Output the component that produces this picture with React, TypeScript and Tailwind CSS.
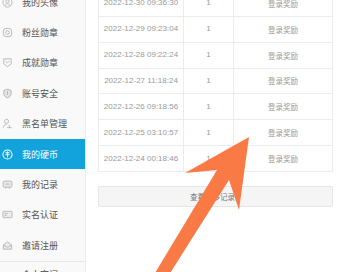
import React from "react";

const ic = "#b5b5b5";

function Icon({ name, active }: { name: string; active?: boolean }) {
  const c = active ? "#ffffff" : ic;
  const common = { width: 11, height: 11, viewBox: "0 0 12 12", fill: "none", stroke: c, strokeWidth: 1 } as const;
  switch (name) {
    case "avatar":
      return (
        <svg {...common}>
          <circle cx="6" cy="6" r="5" />
          <circle cx="6" cy="4.8" r="1.8" />
          <path d="M3 9.5c.8-1.5 1.8-2 3-2s2.2.5 3 2" />
        </svg>
      );
    case "fans":
      return (
        <svg {...common}>
          <rect x="1.5" y="1.5" width="9" height="9" rx="3" />
          <circle cx="6" cy="6" r="2" />
        </svg>
      );
    case "achieve":
      return (
        <svg {...common}>
          <path d="M2 2h8v5.5L6 10.5 2 7.5z" />
          <path d="M4 4.5l2 2 2-2" />
        </svg>
      );
    case "safe":
      return (
        <svg {...common}>
          <path d="M6 1.2l4 1.5v3.5c0 2.3-1.8 3.8-4 4.6-2.2-.8-4-2.3-4-4.6V2.7z" fill="#e4e4e4" />
          <path d="M6 3.5v4" />
        </svg>
      );
    case "black":
      return (
        <svg {...common}>
          <circle cx="5" cy="3.6" r="2.2" />
          <path d="M1.5 10.5c0-2.2 1.6-3.7 3.5-3.7" />
          <path d="M5.5 10.5h5M8 7.5v3" />
        </svg>
      );
    case "coin":
      return (
        <svg {...common} strokeWidth={1.1}>
          <circle cx="6" cy="6" r="5" />
          <path d="M3.8 4h4.4M6 2.8V9.4M3.8 6.2h4.4" />
        </svg>
      );
    case "record":
      return (
        <svg {...common}>
          <rect x="1.2" y="2.2" width="9.6" height="6.8" rx="1.5" fill="#e8e8e8" />
          <path d="M4 9v1.6M8 9v1.6M4 5.6h4" />
        </svg>
      );
    case "realname":
      return (
        <svg {...common}>
          <rect x="1" y="2.5" width="10" height="7" rx="1" fill="#ececec" />
          <path d="M3 5h3M3 7h2" />
        </svg>
      );
    case "invite":
      return (
        <svg {...common}>
          <path d="M1.5 5.5L6 2l4.5 3.5V10h-9z" fill="#ececec" />
          <path d="M1.5 5.5L6 8l4.5-2.5" />
        </svg>
      );
    default:
      return null;
  }
}

const menu = [
  { t: "我的头像", i: "avatar" },
  { t: "粉丝勋章", i: "fans" },
  { t: "成就勋章", i: "achieve" },
  { t: "账号安全", i: "safe" },
  { t: "黑名单管理", i: "black" },
  { t: "我的硬币", i: "coin", active: true },
  { t: "我的记录", i: "record" },
  { t: "实名认证", i: "realname" },
  { t: "邀请注册", i: "invite" },
];

const rows = [
  "2022-12-30 09:36:30",
  "2022-12-29 09:23:04",
  "2022-12-28 09:22:24",
  "2022-12-27 11:18:24",
  "2022-12-26 09:18:56",
  "2022-12-25 03:10:57",
  "2022-12-24 00:18:46",
];

const cjk = { fontFamily: '"Noto Sans CJK SC", "Noto Sans", sans-serif' };
const lat = { fontFamily: '"Liberation Sans", "Noto Sans CJK SC", sans-serif' };

export default function App() {
  return (
    <div className="relative w-[340px] h-[272px] overflow-hidden bg-white">
      <div className="flex h-full">
        <aside className="w-[86px] shrink-0 bg-[#f9f9f9] border-r border-[#ececec] flex flex-col mt-[-13px]">
          {menu.map((m) => (
            <div
              key={m.t}
              className={`h-[30.4px] shrink-0 flex items-center pl-[2px] gap-[9px] ${m.active ? "bg-[#12a3dc]" : ""}`}
            >
              <Icon name={m.i} active={m.active} />
              <span
                style={cjk}
                className={`text-[9px] leading-none ${m.active ? "text-white" : "text-[#555]"}`}
              >
                {m.t}
              </span>
            </div>
          ))}
          <div className="border-t border-[#e6e6e6] h-[30px] shrink-0 flex items-start pt-[8px] pl-[22px] gap-[8px]">
            <span style={cjk} className="text-[9px] leading-none text-[#444]">个人空间</span>
            <span style={cjk} className="text-[8px] leading-none text-[#999]">›</span>
          </div>
        </aside>
        <main className="flex-1 pl-[12px] pr-[7px]">
          <div className="mt-[-9px] border-l border-r border-[#ececec]">
            {rows.map((d) => (
              <div key={d} className="h-[25.86px] flex border-b border-[#ececec]">
                <div style={lat} className="w-[85px] flex items-center justify-center text-[8px] text-[#9a9a9a] border-r border-[#ececec]">
                  {d}
                </div>
                <div style={lat} className="w-[50px] flex items-center justify-center text-[8px] text-[#9a9a9a] border-r border-[#ececec]">
                  1
                </div>
                <div style={cjk} className="flex-1 flex items-center justify-center text-[7.5px] text-[#9a9a9a]">
                  登录奖励
                </div>
              </div>
            ))}
          </div>
          <div
            style={cjk}
            className="mt-[14px] h-[21px] rounded-[2px] bg-[#f5f5f5] border border-[#e6e6e6] flex items-center justify-center text-[7.5px] text-[#777] pr-[6px]"
          >
            查看更多记录
          </div>
        </main>
      </div>
      <svg className="absolute inset-0 pointer-events-none" width="340" height="272" viewBox="0 0 340 272">
        <polygon
          points="152,278 217,170 185,173 249,137 239,210 229,180 167,278"
          fill="#f97a45"
        />
      </svg>
    </div>
  );
}
